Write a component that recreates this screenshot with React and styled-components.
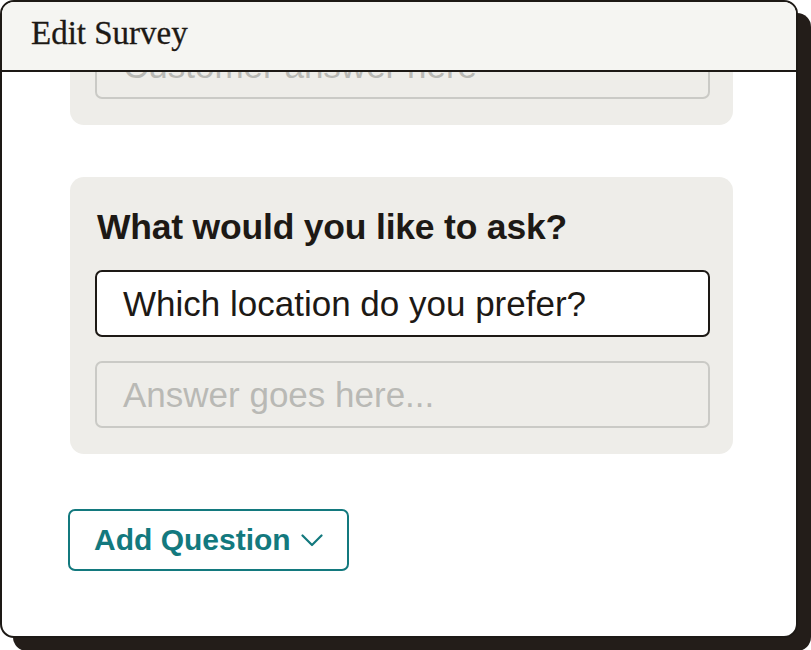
import React from 'react';
import styled, { createGlobalStyle } from 'styled-components';

const GlobalStyle = createGlobalStyle`
  html, body {
    margin: 0;
    padding: 0;
    background: #fff;
  }
  body {
    font-family: "Liberation Sans", Arial, sans-serif;
    color: #1d1915;
  }
`;

const Page = styled.div`
  width: 811px;
  height: 650px;
  overflow: hidden;
`;

const Window = styled.div`
  width: 798px;
  height: 638px;
  box-sizing: border-box;
  border: 2px solid #1d1915;
  border-radius: 14px;
  background: #fff;
  box-shadow: 13px 13px 0 #231d19;
  display: flex;
  flex-direction: column;
  overflow: hidden;
`;

const Header = styled.div`
  flex: 0 0 auto;
  height: 70px;
  box-sizing: border-box;
  border-bottom: 2px solid #1d1915;
  background: #f5f5f2;
  display: flex;
  align-items: center;
  padding: 0 29px 5px;
  position: relative;
  z-index: 1;
`;

const Title = styled.h1`
  margin: 0;
  font-family: "Liberation Serif", "Times New Roman", serif;
  font-weight: normal;
  font-size: 33px;
  letter-spacing: 0;
  color: #1d1915;
  -webkit-text-stroke: 0.3px #1d1915;
`;

const Body = styled.div`
  flex: 1 1 auto;
  overflow: hidden;
  padding: 0 63px 0 68px;
`;

// the list is scrolled: the first card sits mostly under the header
const Stack = styled.div`
  display: flex;
  flex-direction: column;
  align-items: flex-start;
  gap: 52px;
  margin-top: -66px;
`;

const Card = styled.div`
  align-self: stretch;
  background: #eeede9;
  border-radius: 14px;
  padding: 26px 23px 26px 25px;
  display: flex;
  flex-direction: column;
  gap: 24px;
`;

const Question = styled.h2`
  margin: 4px 0 -1px 2px;
  font-size: 35.5px;
  line-height: 40px;
  font-weight: bold;
  letter-spacing: -0.2px;
  color: #1d1915;
`;

const Field = styled.div`
  flex: 0 0 67px;
  height: 67px;
  box-sizing: border-box;
  border: 2px solid ${(p) => (p.$active ? '#1d1915' : '#cacac6')};
  border-radius: 7px;
  background: ${(p) => (p.$active ? '#fff' : 'transparent')};
  display: flex;
  align-items: center;
  padding: 0 26px;
  font-size: 35px;
  color: ${(p) => (p.$active ? '#1d1915' : '#b9b9b5')};
  white-space: nowrap;
  overflow: hidden;
`;

const AddButton = styled.button`
  margin: 3px 0 0 -2px;
  height: 62px;
  box-sizing: border-box;
  border: 2px solid #13797e;
  border-radius: 7px;
  background: #fff;
  color: #13797e;
  font-family: "Liberation Sans", Arial, sans-serif;
  font-weight: bold;
  font-size: 30px;
  padding: 0 24px 0 24px;
  display: flex;
  align-items: center;
  gap: 10px;
  cursor: pointer;
`;

const Chevron = () => (
  <svg width="22" height="13" viewBox="0 0 22 13" fill="none">
    <path d="M1.5 1.5 L11 11 L20.5 1.5" stroke="#13797e" strokeWidth="2.2" strokeLinecap="round" strokeLinejoin="round" />
  </svg>
);

export default function App() {
  return (
    <Page>
      <GlobalStyle />
      <Window>
        <Header>
          <Title>Edit Survey</Title>
        </Header>
        <Body>
          <Stack>
            <Card>
              <Field>Customer answer here</Field>
            </Card>
            <Card>
              <Question>What would you like to ask?</Question>
              <Field $active>Which location do you prefer?</Field>
              <Field>Answer goes here...</Field>
            </Card>
            <AddButton>
              Add Question
              <Chevron />
            </AddButton>
          </Stack>
        </Body>
      </Window>
    </Page>
  );
}
